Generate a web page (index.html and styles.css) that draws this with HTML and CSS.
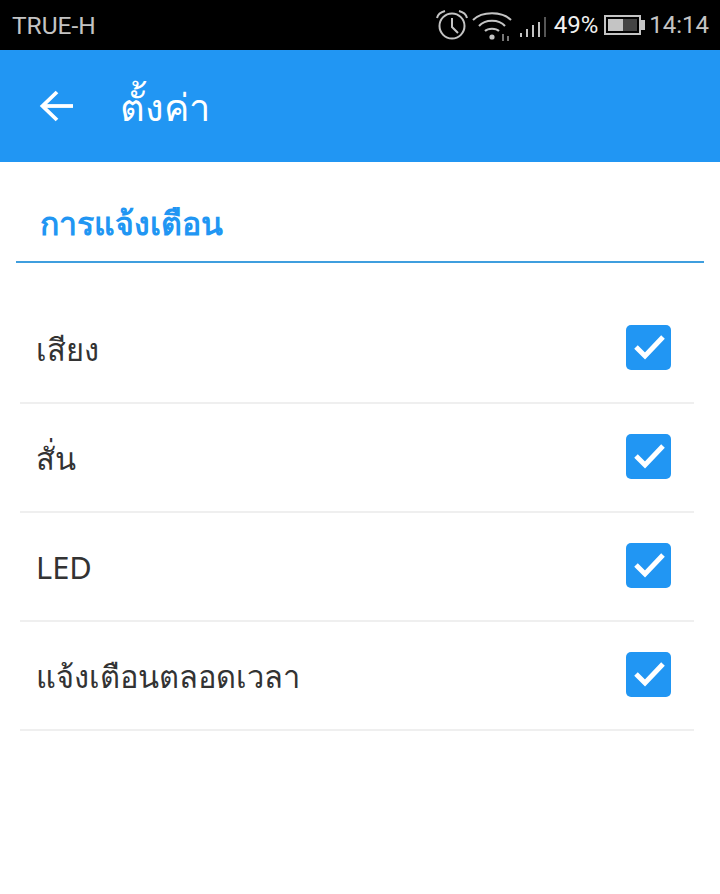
FILE: index.html
```html
<!DOCTYPE html>
<html lang="th">
<head>
<meta charset="utf-8">
<title>ตั้งค่า</title>
<link rel="stylesheet" href="styles.css">
</head>
<body>
<div class="status">
  <span class="carrier">TRUE-H</span>
  <div class="status-right">
    <svg class="ic-alarm" width="34" height="32" viewBox="0 0 34 32" fill="none" stroke="#c4c4c4" stroke-width="2"><circle cx="17" cy="17" r="12.5"/><path d="M17 9v9l6 6"/><path d="M2 9C3 5 6 3 10 2M32 9C31 5 28 3 24 2"/></svg>
    <svg class="ic-wifi" width="40" height="32" viewBox="0 0 40 32" fill="none" stroke="#c4c4c4" stroke-width="2"><path d="M1 11C10 2 30 2 39 11"/><path d="M7 17C13 10 27 10 33 17"/><path d="M13 22C16 19 24 19 27 22"/><circle cx="20" cy="28" r="2.6" fill="#c4c4c4" stroke="none"/><path d="M31 32v-7M36 32v-5" stroke="#777"/></svg>
    <svg class="ic-signal" width="28" height="24" viewBox="0 0 28 24" fill="none" stroke="#c4c4c4" stroke-width="2"><path d="M2 22v-4M8 22v-8M14 22v-12M20 22v-15"/><path d="M26 22V2" stroke="#555"/></svg>
    <span class="pct">49%</span>
    <div class="battery"><div class="battery-body"><div class="battery-fill"></div><div class="battery-empty"></div></div><div class="battery-tip"></div></div>
    <span class="time">14:14</span>
  </div>
</div>
<header class="appbar">
  <svg class="back" width="34" height="32" viewBox="0 0 34 32" fill="none" stroke="#fff" stroke-width="3.8"><path d="M34 16H3"/><path d="M18 2L3.500 16L18 30"/></svg>
  <h1 class="title">ตั้งค่า</h1>
</header>
<main class="content">
  <h2 class="section">การแจ้งเตือน</h2>
  <ul class="list">
    <li class="row"><span class="label">เสียง</span><span class="check"><svg width="45" height="45" viewBox="0 0 45 45"><path d="M10 22l9 9L37 12" fill="none" stroke="#fff" stroke-width="5"/></svg></span></li>
    <li class="row"><span class="label">สั่น</span><span class="check"><svg width="45" height="45" viewBox="0 0 45 45"><path d="M10 22l9 9L37 12" fill="none" stroke="#fff" stroke-width="5"/></svg></span></li>
    <li class="row"><span class="label">LED</span><span class="check"><svg width="45" height="45" viewBox="0 0 45 45"><path d="M10 22l9 9L37 12" fill="none" stroke="#fff" stroke-width="5"/></svg></span></li>
    <li class="row"><span class="label">แจ้งเตือนตลอดเวลา</span><span class="check"><svg width="45" height="45" viewBox="0 0 45 45"><path d="M10 22l9 9L37 12" fill="none" stroke="#fff" stroke-width="5"/></svg></span></li>
  </ul>
</main>
</body>
</html>
```
FILE: styles.css
```css
* { box-sizing: border-box; }
html, body { margin: 0; padding: 0; }
body { width: 720px; height: 894px; background: #fff; font-family: "Noto Sans", "Roboto", "DejaVu Sans", sans-serif; overflow: hidden; }
.status { height: 50px; background: #000; display: flex; align-items: center; justify-content: space-between; padding: 0 11px 0 12px; color: #c4c4c4; font-family: Roboto, sans-serif; font-size: 24.5px; }
.status-right { display: flex; align-items: center; }
.ic-alarm { margin-right: 3px; }
.ic-wifi { margin-right: 7px; }
.ic-signal { margin-right: 7px; margin-top: 3px; }
.pct { color: #f0f0f0; margin-right: 6px; font-size: 24px; }
.battery { display: flex; align-items: center; margin-right: 4px; }
.battery-body { width: 37px; height: 20px; border: 2px solid #c4c4c4; padding: 2px; display: flex; }
.battery-fill { width: 15px; background: #c4c4c4; flex: none; }
.battery-empty { flex: 1; background: #444; }
.battery-tip { width: 4px; height: 10px; background: #c4c4c4; }
.time { font-size: 24px; }
.appbar { height: 112px; background: #2196f3; display: flex; align-items: center; padding-left: 39px; }
.back { margin-right: 47px; }
.title { margin: 0; color: #fff; font-size: 38px; font-weight: 400; line-height: 1; }
.content { padding: 0 16px; }
.section { margin: 0; height: 101px; border-bottom: 2px solid #3f9ede; color: #2196f3; font-size: 32px; font-weight: 700; line-height: 1; padding: 45px 0 0 24px; }
.list { list-style: none; margin: 32px 0 0; padding: 0 10px 0 4px; }
.row { height: 109px; display: flex; align-items: center; justify-content: space-between; border-bottom: 2px solid #efefef; padding: 0 23px 2px 16px; color: #333; font-size: 30.800px; line-height: 1; }
.label { margin-top: 3px; }
.check { width: 45px; height: 45px; background: #2196f3; border-radius: 5px; display: block; flex: none; }
.check svg { display: block; }
```
